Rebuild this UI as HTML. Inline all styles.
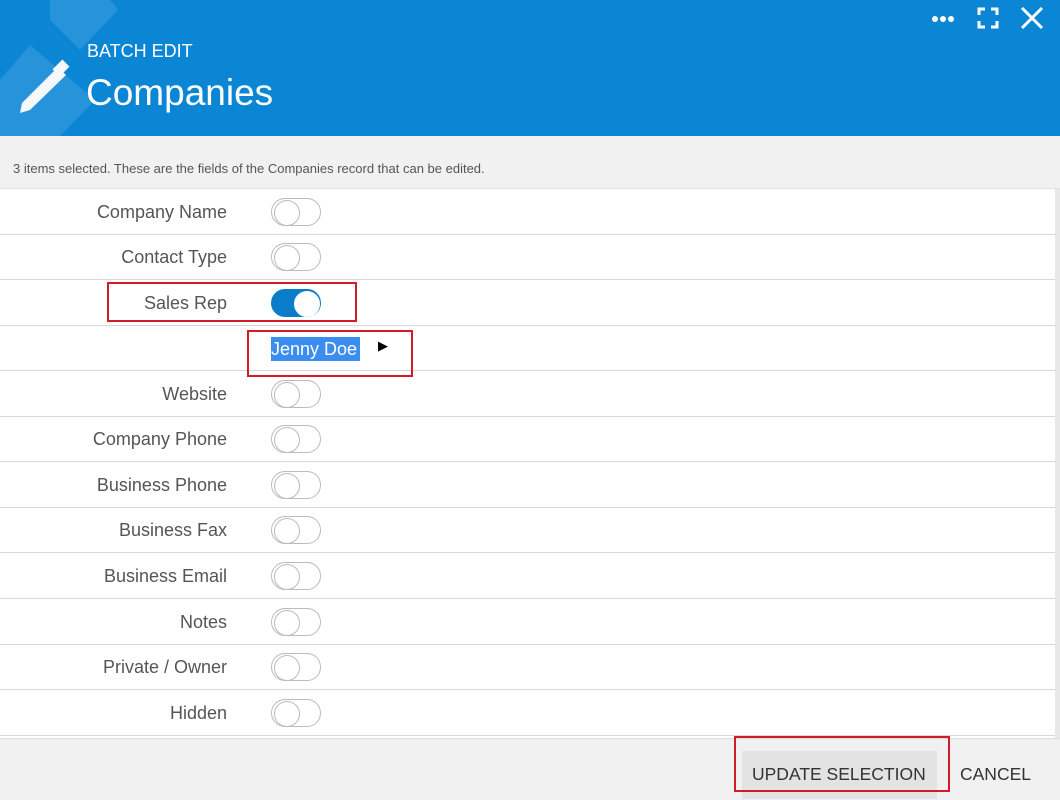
<!DOCTYPE html>
<html><head><style>
*{margin:0;padding:0;box-sizing:border-box}
body{width:1060px;height:800px;overflow:hidden;font-family:"Segoe UI","Liberation Sans",sans-serif;background:#fff;position:relative}
.hdr{position:absolute;left:0;top:0;width:1060px;height:136px;background:#0a86d4;overflow:hidden}
.bar{position:absolute;left:0;top:136px;width:1060px;height:53px;background:#f1f1f1;border-bottom:1px solid #e0e0e0}
.bar span{position:absolute;left:13px;top:25px;font-size:13px;color:#555}
.row{position:absolute;left:0;width:1055px;height:46px;border-bottom:1px solid #d8d8d8}
.lbl{position:absolute;right:828px;top:13px;font-size:18px;color:#555;white-space:nowrap}
.tg{position:absolute;left:271px;top:9px;width:50px;height:28px;border:1px solid #bbb;border-radius:14px;background:#fff}
.tg::after{content:"";position:absolute;left:2px;top:1px;width:24px;height:24px;border-radius:50%;border:1px solid #bbb;background:#fff}
.tg.on{background:#0a7dc8;border-color:#0a7dc8}
.tg.on::after{left:22px;border-color:#fff}
.foot{position:absolute;left:0;top:738px;width:1060px;height:62px;background:#f1f1f1;border-top:1px solid #ddd}
.red{position:absolute;border:2px solid #d21c2a}
</style></head><body>
<div class="hdr">
<svg width="300" height="136" style="position:absolute;left:0;top:0">
<polygon points="0,80 30,45 95,100 60,136 0,136" fill="#3a9ddd" opacity="0.6"/>
<polygon points="50,0 110,0 118,10 80,50 50,20" fill="#3a9ddd" opacity="0.6"/>
<polygon points="58,67 66,75 30,110 20,113 22,103" fill="#f4f8fb"/>
<rect x="56" y="61" width="10" height="14" transform="rotate(45 61 68)" fill="#f4f8fb"/>
</svg>
<div style="position:absolute;left:87px;top:41px;font-size:18px;color:#fff">BATCH EDIT</div>
<div style="position:absolute;left:86px;top:70px;font-size:37px;color:#fff;line-height:46px">Companies</div>
<svg width="26" height="8" style="position:absolute;left:931px;top:15px" fill="#fff"><circle cx="4" cy="4" r="3"/><circle cx="12" cy="4" r="3"/><circle cx="20" cy="4" r="3"/></svg>
<svg width="22" height="22" style="position:absolute;left:977px;top:7px" fill="none" stroke="#fff" stroke-width="3"><path d="M2 8V2h6M14 2h6v6M20 14v6h-6M8 20H2v-6"/></svg>
<svg width="24" height="24" style="position:absolute;left:1020px;top:6px" stroke="#fff" stroke-width="3"><path d="M2 2L22 22M22 2L2 22"/></svg>
</div>
<div class="bar"><span>3 items selected. These are the fields of the Companies record that can be edited.</span></div>
<div class="row" style="top:189px"><div class="lbl">Company Name</div><div class="tg"></div></div>
<div class="row" style="top:234px"><div class="lbl">Contact Type</div><div class="tg"></div></div>
<div class="row" style="top:280px"><div class="lbl">Sales Rep</div><div class="tg on"></div></div>
<div class="row" style="top:325px"><span style="position:absolute;left:271px;top:12px;font-size:18px;background:#3b8ef0;color:#fff;line-height:24px;padding-right:3px">Jenny Doe</span><span style="position:absolute;left:378px;top:13px;font-size:13px">▶</span></div>
<div class="row" style="top:371px"><div class="lbl">Website</div><div class="tg"></div></div>
<div class="row" style="top:416px"><div class="lbl">Company Phone</div><div class="tg"></div></div>
<div class="row" style="top:462px"><div class="lbl">Business Phone</div><div class="tg"></div></div>
<div class="row" style="top:507px"><div class="lbl">Business Fax</div><div class="tg"></div></div>
<div class="row" style="top:553px"><div class="lbl">Business Email</div><div class="tg"></div></div>
<div class="row" style="top:599px"><div class="lbl">Notes</div><div class="tg"></div></div>
<div class="row" style="top:644px"><div class="lbl">Private / Owner</div><div class="tg"></div></div>
<div class="row" style="top:690px"><div class="lbl">Hidden</div><div class="tg"></div></div>
<div style="position:absolute;left:1055px;top:189px;width:5px;height:549px;background:#e8e8e8"></div>
<div class="foot">
<div style="position:absolute;left:742px;top:12px;width:195px;height:48px;background:#e3e3e3"></div>
<div style="position:absolute;left:752px;top:25px;font-size:17.5px;color:#333">UPDATE SELECTION</div>
<div style="position:absolute;left:960px;top:25px;font-size:17.5px;color:#333">CANCEL</div>
</div>
<div class="red" style="left:107px;top:282px;width:250px;height:40px"></div>
<div class="red" style="left:247px;top:330px;width:166px;height:47px"></div>
<div class="red" style="left:734px;top:736px;width:216px;height:56px"></div>
</body></html>
